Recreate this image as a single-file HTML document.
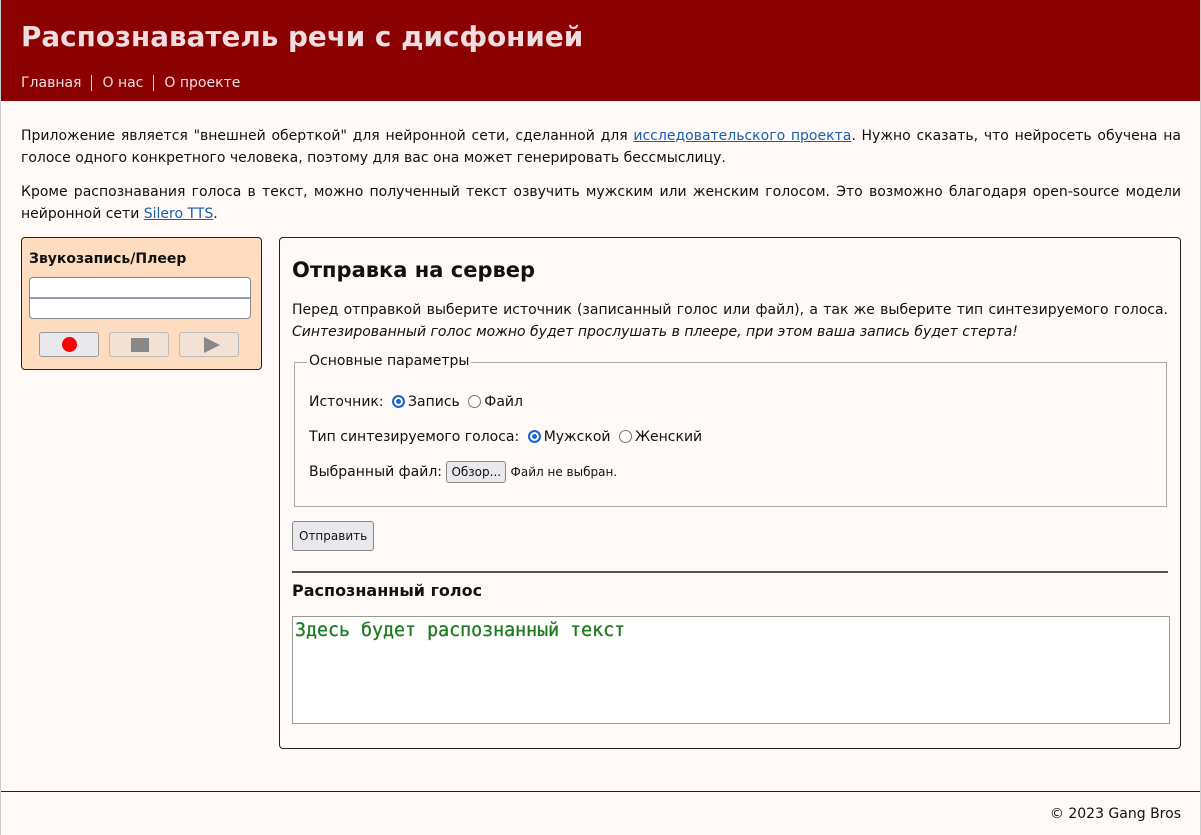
<!DOCTYPE html>
<html><head><meta charset="utf-8"><style>
*{box-sizing:border-box;margin:0;padding:0}
body{width:1201px;height:835px;background:#fffaf7;font-family:"DejaVu Sans","Liberation Sans",sans-serif;font-size:14px;color:#111;position:relative;overflow:hidden}
.edge{position:absolute;top:0;width:1px;height:835px;background:#ccc}
.hdr{position:absolute;left:0;top:0;width:1201px;height:101px;background:#8b0000}
.hdr h1{position:absolute;left:21px;top:20px;font-size:27.8px;font-weight:bold;color:#f0dde0;white-space:nowrap}
.nav{position:absolute;left:21px;top:75px;color:#f0dde0;font-size:14px;white-space:nowrap}
.nav span{padding:0 10px;border-left:1px solid #f0dde0}
.nav span:first-child{padding-left:0;border:none}
p.t{position:absolute;left:21px;width:1160px;text-align:justify;line-height:22px}
a{color:#1a5fa8;text-decoration:underline}
.rec{position:absolute;left:21px;top:237px;width:241px;height:133px;background:#fddcbf;border:1px solid #222;border-radius:4px}
.rec h3{position:absolute;left:7px;top:13px;font-size:14px;font-weight:bold}
.bar{position:absolute;left:7px;top:39px;width:222px;height:42px;background:#fff;border:1px solid #888;border-radius:4px}
.bar div{position:absolute;left:0;top:19px;width:100%;height:2px;background:#9a9ab4}
.b{position:absolute;top:94px;width:60px;height:25px;border:1px solid #bbb;border-radius:3px;background:#f3e1d3}
.main{position:absolute;left:279px;top:237px;width:902px;height:512px;border:1px solid #222;border-radius:4px}
.main h2{position:absolute;left:12px;top:20px;font-size:21px;font-weight:bold}
.fs{position:absolute;left:14px;top:124px;width:873px;height:145px;border:1px solid #aaa}
.lg{position:absolute;left:12px;top:-10px;background:#fffaf7;padding:0 2px;font-size:14px}
.row{position:absolute;left:14px;white-space:nowrap}
.rd{display:inline-block;width:13px;height:13px;border-radius:50%;border:1px solid #777;vertical-align:-2px;background:#fff;margin-left:4px;margin-right:3px}
.rd.on{border:2px solid #1a66cc;box-shadow:inset 0 0 0 2px #fff;background:#1a66cc}
.btn{display:inline-block;border:1px solid #888;border-radius:3px;background:#e9e9ed;font-size:12px;padding:3px 4px}
.out{position:absolute;left:12px;top:378px;width:878px;height:108px;border:1px solid #999;background:#fff;font-family:"DejaVu Sans Mono",monospace;font-size:18.3px;color:#1f7a1f;padding:3px 2px;-webkit-text-stroke:0.3px #1f7a1f}
</style></head><body>
<div class="hdr"><h1>Распознаватель речи с дисфонией</h1>
<div class="nav"><span>Главная</span><span>О нас</span><span>О проекте</span></div></div>
<p class="t" style="top:125px">Приложение является "внешней оберткой" для нейронной сети, сделанной для <a>исследовательского проекта</a>. Нужно сказать, что нейросеть обучена на голосе одного конкретного человека, поэтому для вас она может генерировать бессмыслицу.</p>
<p class="t" style="top:181px">Кроме распознавания голоса в текст, можно полученный текст озвучить мужским или женским голосом. Это возможно благодаря open-source модели нейронной сети <a>Silero TTS</a>.</p>
<div class="rec"><h3>Звукозапись/Плеер</h3><div class="bar"><div></div></div>
<div class="b" style="left:17px;background:#e9e9ed;border-color:#999"><div style="position:absolute;left:22px;top:4px;width:15px;height:15px;border-radius:50%;background:#f00"></div></div>
<div class="b" style="left:87px"><div style="position:absolute;left:21px;top:5px;width:18px;height:14px;background:#888"></div></div>
<div class="b" style="left:157px"><div style="position:absolute;left:24px;top:4px;width:0;height:0;border-left:16px solid #888;border-top:8px solid transparent;border-bottom:8px solid transparent"></div></div>
</div>
<div class="main"><h2>Отправка на сервер</h2>
<p style="position:absolute;left:12px;top:61px;width:876px;text-align:justify;line-height:22px">Перед отправкой выберите источник (записанный голос или файл), а так же выберите тип синтезируемого голоса. <i>Синтезированный голос можно будет прослушать в плеере, при этом ваша запись будет стерта!</i></p>
<div class="fs"><span class="lg">Основные параметры</span>
<div class="row" style="top:31px">Источник: <span class="rd on"></span>Запись <span class="rd"></span>Файл</div>
<div class="row" style="top:66px">Тип синтезируемого голоса: <span class="rd on"></span>Мужской <span class="rd"></span>Женский</div>
<div class="row" style="top:98px">Выбранный файл: <span class="btn">Обзор...</span> <span style="font-size:12px">Файл не выбран.</span></div>
</div>
<span class="btn" style="position:absolute;left:12px;top:283px;padding:7px 6px">Отправить</span>
<div style="position:absolute;left:12px;top:333px;width:876px;height:2px;background:#555"></div>
<div style="position:absolute;left:12px;top:343px;font-size:16px;font-weight:bold">Распознанный голос</div>
<div class="out">Здесь будет распознанный текст</div>
</div>
<div style="position:absolute;left:0;top:791px;width:1201px;height:1px;background:#222"></div>
<div style="position:absolute;right:20px;top:806px;font-size:14px">© 2023 Gang Bros</div>
<div class="edge" style="left:0"></div><div class="edge" style="right:0"></div>
</body></html>
